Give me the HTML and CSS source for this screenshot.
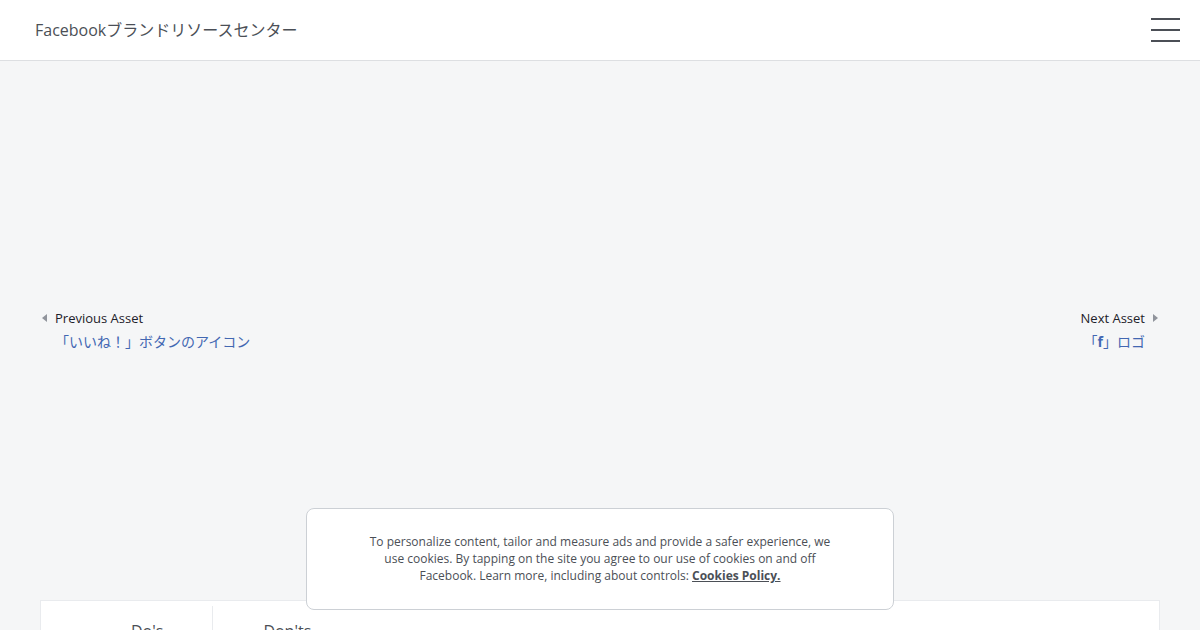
FILE: index.html
```html
<!DOCTYPE html>
<html lang="ja">

<head>
    <meta charset="UTF-8">
    <meta name="viewport" content="width=device-width, initial-scale=1.0">
    <title>Facebookブランドリソースセンター</title>
    <link rel="stylesheet" href="styles.css">
</head>

<body>
    <header class="topbar">
        <a class="brand" href="#">Facebookブランドリソースセンター</a>
        <button class="menu-btn" aria-label="Menu">
            <span></span><span></span><span></span>
        </button>
    </header>

    <main class="asset-page">
        <div class="asset-preview"></div>

        <nav class="asset-nav">
            <div class="asset-nav-item prev">
                <div class="asset-nav-label"><span class="tri tri-left"></span>Previous Asset</div>
                <a class="asset-nav-link" href="#">「いいね！」ボタンのアイコン</a>
            </div>
            <div class="asset-nav-item next">
                <div class="asset-nav-label">Next Asset<span class="tri tri-right"></span></div>
                <a class="asset-nav-link" href="#">「<b>f</b>」ロゴ</a>
            </div>
        </nav>

        <section class="guide-card">
            <div class="guide-tabs">
                <div class="guide-tab first">Do's</div>
                <div class="guide-tab">Don'ts</div>
            </div>
        </section>
    </main>

    <div class="cookie-banner">
        <p>To personalize content, tailor and measure ads and provide a safer experience, we use cookies. By tapping on the site you agree to our use of cookies on and off Facebook. Learn more, including about controls: <a href="#">Cookies Policy.</a></p>
    </div>
</body>

</html>
```

FILE: styles.css
```css
body {
    font-family: 'Open Sans', 'Noto Sans CJK JP', sans-serif;
    background: #f5f6f7;
    margin: 0;
    height: 630px;
    overflow: hidden;
    color: #1d2129;
}

.topbar {
    height: 60px;
    background: #fff;
    border-bottom: 1px solid #dddfe2;
    display: flex;
    align-items: center;
    justify-content: space-between;
    padding: 0 20px 0 35px;
}

.brand {
    font-size: 16px;
    color: #4b4f56;
    text-decoration: none;
    line-height: 20px;
}

.menu-btn {
    width: 29px;
    height: 24px;
    background: none;
    border: 0;
    padding: 0;
    display: flex;
    flex-direction: column;
    justify-content: space-between;
    cursor: pointer;
}

.menu-btn span {
    display: block;
    height: 2px;
    background: #4b4f56;
}

.asset-page {
    padding: 0 40px;
}

.asset-preview {
    height: 248px;
}

.asset-nav {
    display: flex;
    justify-content: space-between;
    padding: 0 15px;
}

.asset-nav-item {
    display: flex;
    flex-direction: column;
}

.asset-nav-item.next {
    align-items: flex-end;
}

.asset-nav-label {
    font-size: 13px;
    line-height: 18px;
    color: #1d2129;
    display: flex;
    align-items: center;
}

.tri {
    width: 0;
    height: 0;
    border-top: 4px solid transparent;
    border-bottom: 4px solid transparent;
}

.tri-left {
    border-right: 5px solid #90949c;
    margin-left: -13px;
    margin-right: 8px;
}

.tri-right {
    border-left: 5px solid #90949c;
    margin-left: 8px;
    margin-right: -13px;
}

.asset-nav-link {
    font-size: 14px;
    line-height: 20px;
    margin-top: 5px;
    color: #4267b2;
    text-decoration: none;
}

.asset-nav-link b {
    font-weight: 700;
}

.guide-card {
    margin-top: 248px;
    background: #fff;
    border: 1px solid #e9ebee;
    height: 60px;
}

.guide-tabs {
    display: flex;
    height: 100%;
}

.guide-tab {
    font-size: 16px;
    line-height: 20px;
    color: #4b4f56;
    padding: 20px 50px 0;
}

.guide-tab.first {
    padding-left: 90px;
    padding-right: 49px;
    border-right: 1px solid #e9ebee;
    margin-top: 5px;
    padding-top: 15px;
}

.cookie-banner {
    position: fixed;
    left: 50%;
    bottom: 20px;
    transform: translateX(-50%);
    width: 586px;
    background: #fff;
    border: 1px solid #ccd0d5;
    border-radius: 8px;
}

.cookie-banner p {
    margin: 0;
    padding: 24px 60px 25px;
    font-size: 12px;
    line-height: 17px;
    text-align: center;
    color: #4b4f56;
}

.cookie-banner a {
    color: #4b4f56;
    font-weight: 700;
    text-decoration: underline;
}
```
